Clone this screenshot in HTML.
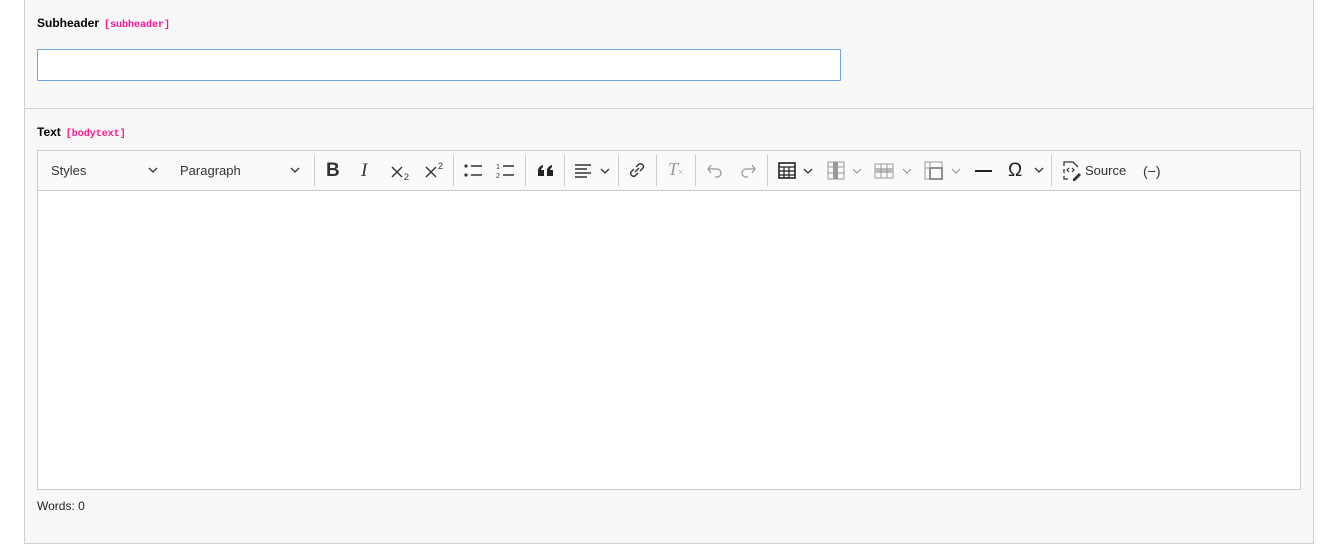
<!DOCTYPE html>
<html><head><style>
body{margin:0;width:1338px;height:559px;background:#fff;font-family:"Liberation Sans",sans-serif;position:relative;overflow:hidden}
.panel{position:absolute;left:24px;top:-1px;width:1288px;height:544px;background:#f8f8f8;border:1px solid #d0d0d0;border-top:none}
.div{position:absolute;left:24px;top:108px;width:1290px;height:1px;background:#d0d0d0}
.lbl{position:absolute;font-weight:bold;font-size:12px;color:#000}
.lbl code{font-family:"Liberation Mono",monospace;font-weight:bold;color:#ff1493;font-size:10px;margin-left:5px}
.inp{position:absolute;left:37px;top:49px;width:802px;height:30px;background:#fff;border:1px solid #6fa6de;border-radius:1px}
.ed{position:absolute;left:37px;top:150px;width:1262px;height:338px;border:1px solid #ccc;background:#fff}
.tb{position:absolute;left:0;top:0;width:1262px;height:39px;background:#fafafa;border-bottom:1px solid #ccc}
.t{position:absolute;top:12px;font-size:13px;color:#333}
.sep{position:absolute;top:4px;width:1px;height:31px;background:#ccc}
svg{position:absolute}
.w{position:absolute;left:37px;top:499px;font-size:12px;color:#222}
</style></head><body>
<div class="panel"></div>
<div class="div"></div>
<div class="lbl" style="left:37px;top:16px">Subheader<code>[subheader]</code></div>
<div class="inp"></div>
<div class="lbl" style="left:37px;top:125px">Text<code>[bodytext]</code></div>
<div class="ed"><div class="tb">
<span class="t" style="left:13px">Styles</span>
<svg style="left:110px;top:15px" width="10" height="8"><path d="M1 2l4 4 4-4" stroke="#333" fill="none" stroke-width="1.3"/></svg>
<span class="t" style="left:142px">Paragraph</span>
<svg style="left:252px;top:15px" width="10" height="8"><path d="M1 2l4 4 4-4" stroke="#333" fill="none" stroke-width="1.3"/></svg>
<div class="sep" style="left:276px"></div>
<span class="t" style="left:288px;top:9px;font-size:19px;font-weight:bold">B</span>
<span class="t" style="left:323px;top:9px;font-size:19px;font-style:italic;font-family:'Liberation Serif',serif">I</span>
<svg style="left:352px;top:12px" width="22" height="18"><path d="M2 4l10 10M12 4L2 14" stroke="#333" stroke-width="1.4"/><text x="14" y="17" font-size="9" fill="#333" font-family="Liberation Sans">2</text></svg>
<svg style="left:386px;top:10px" width="22" height="18"><path d="M2 6l10 10M12 6L2 16" stroke="#333" stroke-width="1.4"/><text x="14" y="8" font-size="9" fill="#333" font-family="Liberation Sans">2</text></svg>
<div class="sep" style="left:415px"></div>
<svg style="left:426px;top:12px" width="20" height="16"><circle cx="2" cy="3" r="1.6" fill="#333"/><circle cx="2" cy="12" r="1.6" fill="#333"/><path d="M7 3h11M7 12h11" stroke="#333" stroke-width="1.5"/></svg>
<svg style="left:458px;top:11px" width="20" height="18"><text x="0" y="7" font-size="7" fill="#333">1</text><text x="0" y="16" font-size="7" fill="#333">2</text><path d="M7 4h11M7 13h11" stroke="#333" stroke-width="1.5"/></svg>
<div class="sep" style="left:487px"></div>
<svg style="left:499px;top:13px" width="18" height="14"><path d="M1 12V7c0-3 2-5 5-6v2c-1 1-2 2-2 3h3v6zM10 12V7c0-3 2-5 5-6v2c-1 1-2 2-2 3h3v6z" fill="#222"/></svg>
<div class="sep" style="left:526px"></div>
<svg style="left:537px;top:12px" width="36" height="16"><path d="M0 2h16M0 6h12M0 10h16M0 14h12" stroke="#333" stroke-width="1.4"/><path d="M26 6l4 4 4-4" stroke="#333" fill="none" stroke-width="1.3"/></svg>
<div class="sep" style="left:580px"></div>
<svg style="left:590px;top:10px" width="18" height="18"><path d="M8 6l3-3a3 3 0 0 1 4 4l-3 3M10 12l-3 3a3 3 0 0 1-4-4l3-3M7 11l4-4" stroke="#333" fill="none" stroke-width="1.4"/></svg>
<div class="sep" style="left:618px"></div>
<span class="t" style="left:630px;top:8px;font-size:18px;color:#999;font-style:italic;font-family:'Liberation Serif',serif">T<span style="font-size:9px;font-style:normal">×</span></span>
<div class="sep" style="left:657px"></div>
<svg style="left:668px;top:11px" width="18" height="16"><path d="M5 3L2 7l3 4M2 7h9a4 4 0 0 1 0 8h-2" stroke="#999" fill="none" stroke-width="1.3"/></svg>
<svg style="left:701px;top:11px" width="18" height="16"><path d="M13 3l3 4-3 4M16 7H7a4 4 0 0 0 0 8h2" stroke="#999" fill="none" stroke-width="1.3"/></svg>
<div class="sep" style="left:729px"></div>
<svg style="left:740px;top:11px" width="40" height="18"><rect x="1" y="1" width="16" height="15" fill="none" stroke="#222" stroke-width="1.6"/><path d="M1 5h16M1 9h16M1 13h16M6 5v11M11 5v11" stroke="#222" stroke-width="1.2"/><path d="M26 7l4 4 4-4" stroke="#333" fill="none" stroke-width="1.3"/></svg>
<svg style="left:789px;top:10px" width="38" height="20"><rect x="1" y="1" width="16" height="17" fill="none" stroke="#999"/><rect x="6" y="1" width="5" height="17" fill="#999"/><path d="M1 6h16M1 12h16" stroke="#999"/><path d="M26 8l4 4 4-4" stroke="#999" fill="none" stroke-width="1.2"/></svg>
<svg style="left:836px;top:10px" width="40" height="20"><rect x="1" y="3" width="18" height="14" fill="none" stroke="#999"/><rect x="1" y="7" width="18" height="5" fill="#bbb"/><path d="M7 3v14M13 3v14" stroke="#999"/><path d="M29 8l4 4 4-4" stroke="#999" fill="none" stroke-width="1.2"/></svg>
<svg style="left:886px;top:10px" width="40" height="20"><rect x="1" y="1" width="17" height="17" fill="none" stroke="#999"/><rect x="6" y="7" width="12" height="11" fill="none" stroke="#777" stroke-width="1.6"/><path d="M1 7h5M6 1v6" stroke="#999"/><path d="M28 8l4 4 4-4" stroke="#999" fill="none" stroke-width="1.2"/></svg>
<svg style="left:937px;top:18px" width="18" height="4"><path d="M0 2h17" stroke="#222" stroke-width="2"/></svg>
<span class="t" style="left:970px;top:9px;font-size:19px;color:#222">Ω</span>
<svg style="left:996px;top:15px" width="10" height="8"><path d="M1 2l4 4 4-4" stroke="#333" fill="none" stroke-width="1.3"/></svg>
<div class="sep" style="left:1013px"></div>
<svg style="left:1023px;top:9px" width="22" height="22"><path d="M3 6V2h9l5 5M3 9v4M3 16v3h4" stroke="#333" fill="none" stroke-width="1.3"/><path d="M8 8l-2 2 2 2M11 8l2 2-2 2" stroke="#333" fill="none" stroke-width="1.2"/><path d="M12 19l6-6 2 2-6 6h-2z" fill="#333"/></svg>
<span class="t" style="left:1047px">Source</span>
<span class="t" style="left:1105px;font-size:14px">(−)</span>
</div></div>
<div class="w">Words: 0</div>
</body></html>
